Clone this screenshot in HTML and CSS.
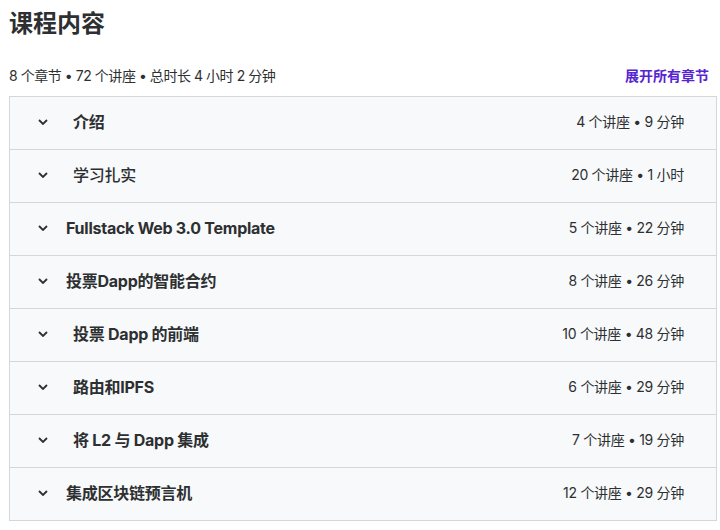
FILE: index.html
```html
<!DOCTYPE html>
<html lang="zh">
<head>
    <meta charset="UTF-8">
    <title>课程内容</title>
    <link rel="stylesheet" href="styles.css">
</head>
<body>
<div class="curriculum">
    <h2 class="title">课程内容</h2>
    <div class="summary">
        <span class="stats">8 个章节 • 72 个讲座 • 总时长 4 小时 2 分钟</span>
        <a href="#" class="expand">展开所有章节</a>
    </div>
    <ul class="sections">
        <li class="section">
            <span class="chevron"><svg width="10" height="6" viewBox="0 0 10 6"><path d="M1 1l4 4 4-4" fill="none" stroke="#2d2f31" stroke-width="1.8"/></svg></span>
            <span class="name indent">介绍</span>
            <span class="meta">4 个讲座 • 9 分钟</span>
        </li>
        <li class="section">
            <span class="chevron"><svg width="10" height="6" viewBox="0 0 10 6"><path d="M1 1l4 4 4-4" fill="none" stroke="#2d2f31" stroke-width="1.8"/></svg></span>
            <span class="name indent light">学习扎实</span>
            <span class="meta">20 个讲座 • 1 小时</span>
        </li>
        <li class="section">
            <span class="chevron"><svg width="10" height="6" viewBox="0 0 10 6"><path d="M1 1l4 4 4-4" fill="none" stroke="#2d2f31" stroke-width="1.8"/></svg></span>
            <span class="name">Fullstack Web 3.0 Template</span>
            <span class="meta">5 个讲座 • 22 分钟</span>
        </li>
        <li class="section">
            <span class="chevron"><svg width="10" height="6" viewBox="0 0 10 6"><path d="M1 1l4 4 4-4" fill="none" stroke="#2d2f31" stroke-width="1.8"/></svg></span>
            <span class="name">投票Dapp的智能合约</span>
            <span class="meta">8 个讲座 • 26 分钟</span>
        </li>
        <li class="section">
            <span class="chevron"><svg width="10" height="6" viewBox="0 0 10 6"><path d="M1 1l4 4 4-4" fill="none" stroke="#2d2f31" stroke-width="1.8"/></svg></span>
            <span class="name indent">投票 Dapp 的前端</span>
            <span class="meta">10 个讲座 • 48 分钟</span>
        </li>
        <li class="section">
            <span class="chevron"><svg width="10" height="6" viewBox="0 0 10 6"><path d="M1 1l4 4 4-4" fill="none" stroke="#2d2f31" stroke-width="1.8"/></svg></span>
            <span class="name indent">路由和IPFS</span>
            <span class="meta">6 个讲座 • 29 分钟</span>
        </li>
        <li class="section">
            <span class="chevron"><svg width="10" height="6" viewBox="0 0 10 6"><path d="M1 1l4 4 4-4" fill="none" stroke="#2d2f31" stroke-width="1.8"/></svg></span>
            <span class="name indent">将 L2 与 Dapp 集成</span>
            <span class="meta">7 个讲座 • 19 分钟</span>
        </li>
        <li class="section">
            <span class="chevron"><svg width="10" height="6" viewBox="0 0 10 6"><path d="M1 1l4 4 4-4" fill="none" stroke="#2d2f31" stroke-width="1.8"/></svg></span>
            <span class="name">集成区块链预言机</span>
            <span class="meta">12 个讲座 • 29 分钟</span>
        </li>
    </ul>
</div>
</body>
</html>
```

FILE: styles.css
```css
* {
    margin: 0;
    padding: 0;
    box-sizing: border-box;
}

body {
    font-family: "Inter", "Noto Sans CJK SC", sans-serif;
    color: #2d2f31;
    background-color: #fff;
}

.curriculum {
    width: 708px;
    margin-left: 9px;
}

.title {
    font-size: 24px;
    font-weight: 700;
    line-height: 32px;
    margin-top: 8px;
}

.summary {
    display: flex;
    justify-content: space-between;
    align-items: center;
    margin-top: 25px;
    height: 20px;
    padding-right: 8px;
}

.stats {
    font-size: 14px;
    letter-spacing: -0.45px;
}

.expand {
    font-size: 14px;
    font-weight: 700;
    color: #5624d0;
    text-decoration: none;
}

.sections {
    list-style: none;
    margin-top: 11px;
    border: 1px solid #d1d7dc;
}

.section {
    display: flex;
    align-items: center;
    height: 53px;
    padding: 0 32px 2px 28px;
    background-color: #f7f9fa;
    border-top: 1px solid #d1d7dc;
}

.section:first-child {
    border-top: none;
    height: 52px;
}

.chevron {
    display: flex;
    width: 10px;
    height: 6px;
}

.name {
    flex: 1;
    margin-left: 18px;
    font-size: 16px;
    font-weight: 700;
    line-height: 20px;
    letter-spacing: -0.25px;
}

.name.indent {
    margin-left: 25px;
}

.name.light {
    font-weight: 500;
}

.meta {
    font-size: 14px;
    line-height: 20px;
    letter-spacing: -0.3px;
}
```
